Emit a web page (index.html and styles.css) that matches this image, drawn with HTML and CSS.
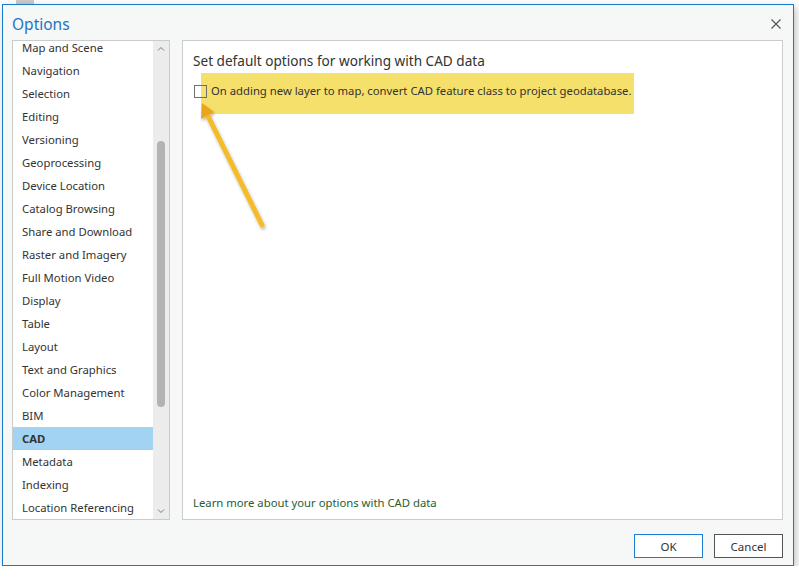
FILE: index.html
```html
<!DOCTYPE html>
<html lang="en">
<head>
    <meta charset="UTF-8">
    <meta name="viewport" content="width=device-width, initial-scale=1.0">
    <title>Options</title>
    <link rel="stylesheet" href="styles.css">
</head>
<body>

<div class="behind"></div>

<div class="dialog">
    <div class="titlebar">
        <h1>Options</h1>
        <svg class="close" width="12" height="12" viewBox="0 0 12 12"><path d="M1.5 1.5 L10.5 10.5 M10.5 1.5 L1.5 10.5" stroke="#555" stroke-width="1.2"/></svg>
    </div>

    <div class="panels">
        <div class="sidebar">
            <ul class="nav">
                <li>Map and Scene</li>
                <li>Navigation</li>
                <li>Selection</li>
                <li>Editing</li>
                <li>Versioning</li>
                <li>Geoprocessing</li>
                <li>Device Location</li>
                <li>Catalog Browsing</li>
                <li>Share and Download</li>
                <li>Raster and Imagery</li>
                <li>Full Motion Video</li>
                <li>Display</li>
                <li>Table</li>
                <li>Layout</li>
                <li>Text and Graphics</li>
                <li>Color Management</li>
                <li>BIM</li>
                <li class="active">CAD</li>
                <li>Metadata</li>
                <li>Indexing</li>
                <li>Location Referencing</li>
            </ul>
            <div class="scrollbar">
                <svg class="arrow-btn" width="16" height="16" viewBox="0 0 16 16"><path d="M5 9.5 L8 6.5 L11 9.5" fill="none" stroke="#7a7a7a" stroke-width="1"/></svg>
                <div class="track"><div class="thumb"></div></div>
                <svg class="arrow-btn" width="16" height="16" viewBox="0 0 16 16"><path d="M5 6.5 L8 9.5 L11 6.5" fill="none" stroke="#7a7a7a" stroke-width="1"/></svg>
            </div>
        </div>

        <div class="content">
            <!-- annotation -->
            <div class="highlight"></div>
            <h2>Set default options for working with CAD data</h2>
            <label class="option">
                <span class="box"></span>
                <span>On adding new layer to map, convert CAD feature class to project geodatabase.</span>
            </label>
            <a class="learn" href="#">Learn more about your options with CAD data</a>
        </div>
    </div>

    <div class="footer">
        <button class="primary">OK</button>
        <button>Cancel</button>
    </div>

    <!-- annotation -->
    <svg class="pointer" width="799" height="578" viewBox="0 0 799 578">
        <g filter="url(#shadow)">
            <line x1="262" y1="225" x2="206" y2="112" stroke="#f4bb2a" stroke-width="5" stroke-linecap="round"/>
            <polygon points="202,103 201,119 214,112" fill="#eaa51a"/>
        </g>
        <defs>
            <filter id="shadow" x="-20%" y="-20%" width="140%" height="140%">
                <feDropShadow dx="1" dy="2" stdDeviation="1.5" flood-color="#000" flood-opacity="0.3"/>
            </filter>
        </defs>
    </svg>
</div>

</body>
</html>
```

FILE: styles.css
```css
body {
    margin: 0;
    padding: 0;
    background-color: #fff;
    font-family: 'Noto Sans', 'Open Sans', sans-serif;
    color: #333;
}

.behind {
    position: absolute;
    left: 16px;
    top: 0;
    width: 18px;
    height: 5px;
    background-color: #c9c9c9;
}

.dialog {
    position: relative;
    margin: 4px 0 0 2px;
    width: 790px;
    height: 560px;
    border: 1px solid #1979ca;
    background-color: #f6f7f7;
    box-shadow: 2px 3px 8px rgba(0, 0, 0, 0.25);
    display: flex;
    flex-direction: column;
}

.titlebar {
    height: 35px;
    display: flex;
    align-items: center;
    justify-content: space-between;
    padding: 0 11px 0 9px;
}

.titlebar h1 {
    margin: 0;
    font-size: 15.5px;
    font-weight: normal;
    color: #1f75c4;
    position: relative;
    top: 1px;
}

.close {
    display: block;
    position: relative;
    top: 1px;
}

.panels {
    display: flex;
    gap: 12px;
    height: 480px;
    padding: 0 10px 0 9px;
}

.sidebar {
    width: 156px;
    border: 1px solid #cbcbcb;
    background-color: #fff;
    display: flex;
    overflow: hidden;
}

.nav {
    list-style: none;
    margin: -5px 0 0 0;
    padding: 0;
    flex: 1;
    font-size: 11.3px;
}

.nav li {
    height: 23px;
    line-height: 23px;
    padding-left: 9px;
    white-space: nowrap;
}

.nav li.active {
    background-color: #a3d3f3;
    font-weight: bold;
    color: #333;
}

.scrollbar {
    width: 16px;
    background-color: #ececec;
    display: flex;
    flex-direction: column;
}

.arrow-btn {
    display: block;
}

.track {
    flex: 1;
    padding: 84px 4px 96px 4px;
}

.thumb {
    height: 100%;
    border-radius: 4px;
    background-color: #b3b3b3;
}

.content {
    flex: 1;
    border: 1px solid #cbcbcb;
    background-color: #fff;
    padding: 11px 10px 9px 10px;
    display: flex;
    flex-direction: column;
    position: relative;
}

.highlight {
    position: absolute;
    left: 18px;
    top: 32px;
    width: 433px;
    height: 41px;
    background-color: #f5e06c;
}

.content h2 {
    margin: 0;
    font-size: 13.6px;
    font-weight: normal;
    line-height: 18px;
    color: #333;
    position: relative;
}

.option {
    display: flex;
    align-items: center;
    gap: 4px;
    margin-top: 13px;
    font-size: 11.3px;
    line-height: 16px;
    color: #333;
    position: relative;
}

.box {
    width: 11px;
    height: 11px;
    border: 1px solid #6f6f6f;
    margin-left: 1px;
}

.learn {
    margin-top: auto;
    font-size: 11.3px;
    color: #1f5e31;
    text-decoration: none;
}

.footer {
    flex: 1;
    display: flex;
    justify-content: flex-end;
    align-items: flex-end;
    gap: 11px;
    padding: 0 10px 7px 0;
}

.footer button {
    width: 69px;
    height: 24px;
    font-family: 'Noto Sans', 'Open Sans', sans-serif;
    font-size: 11.5px;
    color: #333;
    background-color: #fff;
    border: 1px solid #545454;
    cursor: pointer;
    padding: 0;
}

.footer button.primary {
    border-color: #1a7fd4;
}

.pointer {
    position: absolute;
    left: -3px;
    top: -5px;
    z-index: 4;
    pointer-events: none;
}
```
